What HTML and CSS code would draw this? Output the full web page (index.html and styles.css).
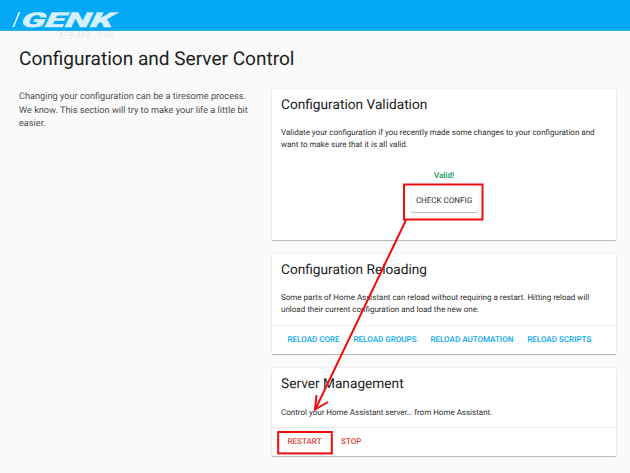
FILE: index.html
```
<!DOCTYPE html>
<html lang="en">
<head>
<meta charset="utf-8">
<title>Configuration and Server Control</title>
<link rel="stylesheet" href="styles.css">
</head>
<body>
<header class="topbar">
  <svg class="brand" width="130" height="44" viewBox="0 0 130 44" role="img" aria-label="GENK">
    <path class="brand-slash" d="M12.4 27 L18.6 12 L20.4 12 L14.2 27Z"/>
    <text class="brand-name" transform="translate(20.5 26.5) skewX(-10)" textLength="92" lengthAdjust="spacingAndGlyphs">GENK</text>
    <text class="brand-site" x="58" y="37" textLength="54">GENK.VN</text>
  </svg>
</header>
<main class="page">
  <h1 class="title"><span>Configuration and Server Control</span></h1>
  <div class="columns">
    <p class="intro">Changing your configuration can be a tiresome process.<br>We know. This section will try to make your life a little bit<br>easier.</p>
    <div class="cards">
      <section class="card validation">
        <h2>Configuration Validation</h2>
        <p class="text">Validate your configuration if you recently made some changes to your configuration and<br>want to make sure that it is all valid.</p>
        <div class="result">Valid!</div>
        <button class="raised">CHECK CONFIG</button>
      </section>
      <section class="card reloading">
        <h2>Configuration Reloading</h2>
        <p class="text">Some parts of Home Assistant can reload without requiring a restart. Hitting reload will<br>unload their current configuration and load the new one.</p>
        <div class="actions"><a>RELOAD CORE</a><a>RELOAD GROUPS</a><a>RELOAD AUTOMATION</a><a>RELOAD SCRIPTS</a></div>
      </section>
      <section class="card management">
        <h2>Server Management</h2>
        <p class="text">Control your Home Assistant server… from Home Assistant.</p>
        <div class="actions danger"><a>RESTART</a><a>STOP</a></div>
      </section>
    </div>
  </div>
</main>
<svg class="annotations" width="630" height="473" viewBox="0 0 630 473">
  <rect x="404" y="184.5" width="78.5" height="35" stroke-width="2"/>
  <rect x="278.2" y="432" width="53.6" height="21.4" stroke-width="2"/>
  <path d="M406 220 L315.5 409" stroke-width="2"/>
  <path d="M316.5 395 L315 409.5 L328 402" stroke-width="2"/>
</svg>
</body>
</html>
```
FILE: styles.css
```
* { box-sizing: border-box; }
body {
  margin: 0;
  width: 630px;
  height: 473px;
  overflow: hidden;
  background: #fafafa;
  color: #212121;
  font-family: Roboto, "Liberation Sans", sans-serif;
  text-rendering: geometricPrecision;
}
h1, h2, p { margin: 0; font-weight: 400; white-space: nowrap; }
.topbar { height: 31px; background: #03a9f4; border-bottom: 1px solid #28b2f2; }
.brand { display: block; overflow: visible; }
.brand-slash { fill: #d5f1fd; }
.brand-name { font: italic 900 20.5px Roboto, sans-serif; fill: #d5f1fd; stroke: #d5f1fd; stroke-width: .3; }
.brand-site { font: 700 8.5px "Liberation Sans", sans-serif; fill: #fff; filter: drop-shadow(0 0 1.2px rgba(0, 0, 0, .22)); }
.page { padding: 0 14px 0 19px; }
.title { height: 58px; padding-top: 16px; font-size: 19.06px; line-height: 24px; }
.columns { display: grid; grid-template-columns: 253px 344px; }
.intro { padding-top: 1px; font-size: 9.18px; line-height: 13.7px; color: #4e4e4e; }
.cards { display: flex; flex-direction: column; gap: 14px; }
.card {
  display: flex;
  flex-direction: column;
  background: #fff;
  border-radius: 1px;
  box-shadow: 0 1px 1px rgba(0, 0, 0, .26), 0 0 2px rgba(0, 0, 0, .12);
}
.validation { height: 151px; }
.reloading { height: 100px; }
.management { height: 88px; }
.card h2 { padding: 7px 9px 0; font-size: 13.7px; line-height: 18px; height: 38px; }
.text { padding: 0 9px; font-size: 8.01px; line-height: 11.7px; color: #303030; }
.management .text { padding-top: 1px; }
.result { margin-top: 19px; text-align: center; font-size: 8.1px; font-weight: 500; line-height: 12px; color: #0f9d58; }
.raised {
  align-self: center;
  width: 67px;
  height: 22px;
  margin-top: 9px;
  padding: 0;
  border: 0;
  border-radius: 2px;
  background: #fff;
  color: #2c2c2c;
  font: 400 8.02px/22px Roboto, sans-serif;
  text-rendering: geometricPrecision;
  white-space: nowrap;
  box-shadow: 0 1px 1px rgba(0, 0, 0, .28), 0 0 1px rgba(0, 0, 0, .12);
}
.actions {
  display: flex;
  gap: 13.8px;
  height: 29px;
  margin-top: auto;
  padding: 0 15.5px;
  border-top: 1px solid #eee;
  font-size: 8.05px;
  font-weight: 500;
  line-height: 28px;
  white-space: nowrap;
  color: #03a9f4;
}
.danger { gap: 19.5px; color: #db4437; }
.annotations { position: absolute; left: 0; top: 0; fill: none; stroke: #ee0c0c; pointer-events: none; }
```
